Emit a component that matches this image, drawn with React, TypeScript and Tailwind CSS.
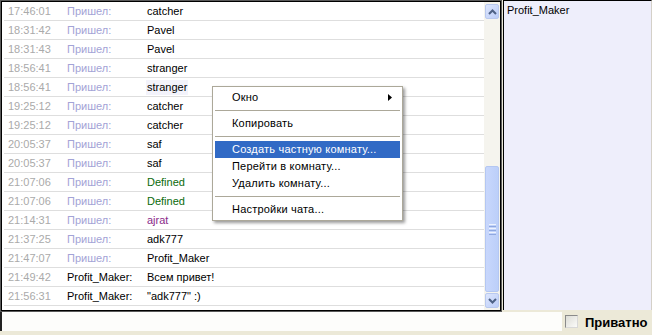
import React from "react";

type Row = { t: string; who: string; msg: string; whoDark?: boolean; color?: string; sel?: boolean };

const rows: Row[] = [
  { t: "17:46:01", who: "Пришел:", msg: "catcher" },
  { t: "18:31:42", who: "Пришел:", msg: "Pavel" },
  { t: "18:31:43", who: "Пришел:", msg: "Pavel" },
  { t: "18:56:41", who: "Пришел:", msg: "stranger" },
  { t: "18:56:41", who: "Пришел:", msg: "stranger", sel: true },
  { t: "19:25:12", who: "Пришел:", msg: "catcher" },
  { t: "19:25:12", who: "Пришел:", msg: "catcher" },
  { t: "20:05:37", who: "Пришел:", msg: "saf" },
  { t: "20:05:37", who: "Пришел:", msg: "saf" },
  { t: "21:07:06", who: "Пришел:", msg: "Defined", color: "green" },
  { t: "21:07:06", who: "Пришел:", msg: "Defined", color: "green" },
  { t: "21:14:31", who: "Пришел:", msg: "ajrat", color: "purple" },
  { t: "21:37:25", who: "Пришел:", msg: "adk777" },
  { t: "21:47:07", who: "Пришел:", msg: "Profit_Maker" },
  { t: "21:49:42", who: "Profit_Maker:", msg: "Всем привет!", whoDark: true },
  { t: "21:56:31", who: "Profit_Maker:", msg: "\"adk777\" :)", whoDark: true },
];

function Chevron({ up }: { up?: boolean }) {
  return (
    <svg width="9" height="6" viewBox="0 0 9 6">
      <path
        d={up ? "M1 5 L4.5 1.5 L8 5" : "M1 1 L4.5 4.5 L8 1"}
        fill="none"
        stroke="#4d6185"
        strokeWidth="2"
      />
    </svg>
  );
}

function ScrollButton({ up }: { up?: boolean }) {
  return (
    <div className="h-[15px] w-[14px] mx-auto rounded-[2px] border border-[#b9c9ef] bg-gradient-to-br from-[#dde6fd] to-[#bccdf8] flex items-center justify-center">
      <Chevron up={up} />
    </div>
  );
}

function Scrollbar() {
  return (
    <div className="w-[16px] h-full bg-[#f5f4ee] flex flex-col py-[2px]">
      <ScrollButton up />
      <div className="flex-1 flex flex-col">
        <div className="flex-1" />
        <div className="h-[126px] w-[14px] mx-auto rounded-[2px] border border-[#b4c7f2] bg-gradient-to-r from-[#c8d7fc] to-[#bccff9] flex flex-col items-center justify-center gap-[1px] mb-px">
          <div className="w-[7px] h-[1px] bg-[#eef3fe]" />
          <div className="w-[7px] h-[1px] bg-[#8fa8e0]" />
          <div className="w-[7px] h-[1px] bg-[#eef3fe]" />
          <div className="w-[7px] h-[1px] bg-[#8fa8e0]" />
          <div className="w-[7px] h-[1px] bg-[#eef3fe]" />
          <div className="w-[7px] h-[1px] bg-[#8fa8e0]" />
        </div>
      </div>
      <ScrollButton />
    </div>
  );
}

function MenuItem({ label, active, arrow }: { label: string; active?: boolean; arrow?: boolean }) {
  return (
    <div
      className={
        "h-[17px] flex items-center pl-[17px] pr-[8px] tracking-[0.2px] " +
        (active ? "bg-[#316ac5] text-white" : "text-black")
      }
    >
      <span className="flex-1 whitespace-nowrap">{label}</span>
      {arrow && (
        <svg width="4" height="7" viewBox="0 0 4 7">
          <path d="M0 0 L4 3.5 L0 7 Z" fill="#000" />
        </svg>
      )}
    </div>
  );
}

function MenuSep() {
  return (
    <div className="h-[9px] flex items-center">
      <div className="w-full h-px bg-[#aca899]" />
    </div>
  );
}

export default function App() {
  return (
    <div className="relative w-[652px] h-[335px] bg-[#ece9d8] flex flex-col overflow-hidden font-['Liberation_Sans',Arial,sans-serif] text-[11px] leading-none">
      <div className="flex h-[312px]">
        <div className="w-[502px] h-full border border-[#5a5a5a]">
          <div className="h-full border border-black bg-white flex">
            <div className="flex-1 flex flex-col pl-[2px]">
              {rows.map((r, i) => (
                <div key={i} className="h-[19px] shrink-0 flex items-center border-b border-[#dedede]">
                  <span className="w-[63px] pl-[4px] text-[#aaaaaa]">{r.t}</span>
                  <span className={"w-[80px] " + (r.whoDark ? "text-black" : "text-[#a3a3d6]")}>{r.who}</span>
                  <span
                    className={
                      (r.color === "green"
                        ? "text-[#0b6b0b]"
                        : r.color === "purple"
                        ? "text-[#8a2b8a]"
                        : "text-black") + (r.sel ? " bg-[#f3f3fb] px-px -mx-px py-[2px]" : "")
                    }
                  >
                    {r.msg}
                  </span>
                </div>
              ))}
            </div>
            <Scrollbar />
          </div>
        </div>
        <div className="ml-px flex-1 h-[310px] border-l border-t border-black border-r border-r-[#d4d0c8] bg-[#eeeefb] pl-[3px] pt-[4px] text-black">
          Profit_Maker
        </div>
      </div>
      <div className="flex h-[23px]">
        <div className="w-[562px] h-[19px] bg-[#fdfdfb] border-l-2 border-[#222]" />
        <div className="flex-1 flex items-start pt-[3px] pl-[3px]">
          <div className="w-[13px] h-[13px] border border-t-[#8a8a8a] border-l-[#8a8a8a] border-b-[#d8d8d8] border-r-[#d8d8d8] bg-gradient-to-br from-[#dcdcd6] to-[#fbfbf9]" />
          <span className="ml-[7px] mt-[1px] font-bold text-[13px] text-black">Приватно</span>
        </div>
      </div>

      <div className="absolute left-[212px] top-[86px] w-[191px] bg-white border border-[#aca899] p-[2px] shadow-[2px_2px_3px_rgba(0,0,0,0.4)]">
        <MenuItem label="Окно" arrow />
        <MenuSep />
        <MenuItem label="Копировать" />
        <MenuSep />
        <MenuItem label="Создать частную комнату..." active />
        <MenuItem label="Перейти в комнату..." />
        <MenuItem label="Удалить комнату..." />
        <MenuSep />
        <MenuItem label="Настройки чата..." />
      </div>
    </div>
  );
}
